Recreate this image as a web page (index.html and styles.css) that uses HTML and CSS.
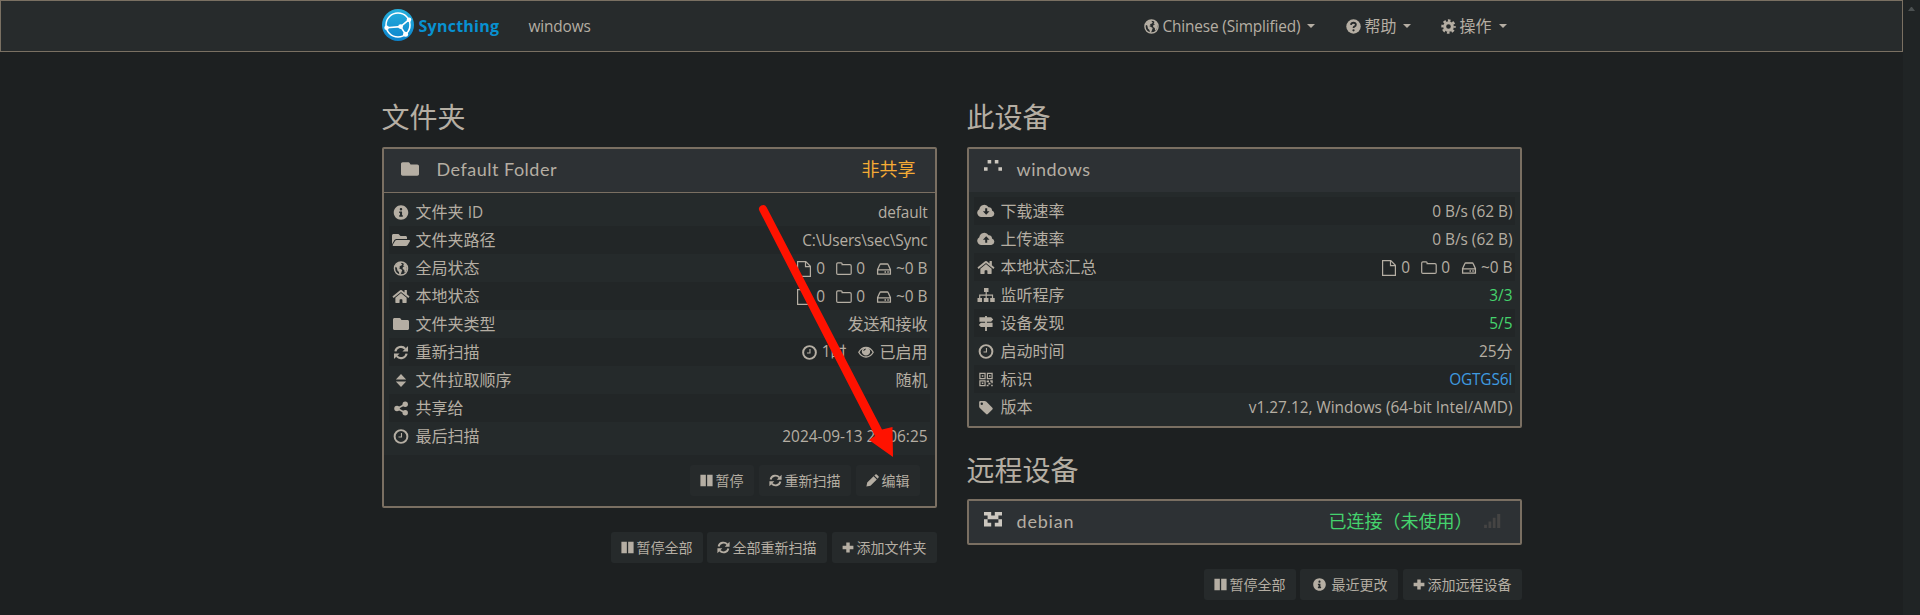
FILE: index.html
```html
<!DOCTYPE html>
<html lang="zh-CN">
<head>
<meta charset="utf-8">
<title>windows | Syncthing</title>
<link rel="stylesheet" href="styles.css">
</head>
<body>
<svg class="sprite" aria-hidden="true">
  <symbol id="folder" viewBox="0 0 512 512"><path d="M464 128H272l-32-52q-8-12-24-12H48C21 64 0 85 0 112v288c0 27 21 48 48 48h416c27 0 48-21 48-48V176c0-27-21-48-48-48z"/></symbol>
  <symbol id="info" viewBox="0 0 512 512"><path d="M256 8C119.043 8 8 119.083 8 256c0 136.997 111.043 248 248 248s248-111.003 248-248C504 119.083 392.957 8 256 8zm0 95c23 0 42 19 42 42s-19 42-42 42-42-19-42-42 19-42 42-42zm64 285c0 7-5 12-12 12h-104c-7 0-12-5-12-12v-28c0-7 5-12 12-12h16v-76h-16c-7 0-12-5-12-12v-24c0-7 5-12 12-12h76c7 0 12 5 12 12v112h16c7 0 12 5 12 12z"/></symbol>
  <symbol id="folder-open" viewBox="0 0 576 512"><path d="M572.694 292.093L500.27 416.248A63.997 63.997 0 0 1 444.989 448H45.025c-18.523 0-30.064-20.093-20.731-36.093l72.424-124.155A64 64 0 0 1 152 256h399.964c18.523 0 30.064 20.093 20.73 36.093zM152 224h328v-48c0-26.51-21.49-48-48-48H272l-64-64H48C21.49 64 0 85.49 0 112v278.046l69.077-118.418C86.214 242.25 117.989 224 152 224z"/></symbol>
  <symbol id="globe" viewBox="0 0 16 16"><circle cx="8" cy="8" r="7" fill="none" stroke="currentColor" stroke-width="1.5"/><path d="M3 3.500L6.500 1l2.500.6L8 3l1.500.8L8 5l-1.500.3.5 1.700-1.500.5 2 1 1.800 1.200-.8 2.300-1 2.500-1.200.3-.5-3-1.600-1.800L3.500 7 1.500 6zM10.500 2.200l2.500 1 1.800 3.300-1 .3.600 1.700-1.200 3-1.400 1-.3-2.800-1.800-1.200.3-2 1.800-1-1.600-.8.800-1z"/></symbol>
  <symbol id="home" viewBox="0 0 576 512"><path d="M280.37 148.26L96 300.11V464a16 16 0 0 0 16 16l112.06-.29a16 16 0 0 0 15.92-16V368a16 16 0 0 1 16-16h64a16 16 0 0 1 16 16v95.64a16 16 0 0 0 16 16.05L464 480a16 16 0 0 0 16-16V300L295.67 148.26a12.19 12.19 0 0 0-15.3 0zM571.6 251.47L488 182.56V44.05a12 12 0 0 0-12-12h-56a12 12 0 0 0-12 12v72.61L318.47 43a48 48 0 0 0-61 0L4.34 251.47a12 12 0 0 0-1.6 16.9l25.5 31A12 12 0 0 0 45.15 301l235.22-193.74a12.19 12.19 0 0 1 15.3 0L530.9 301a12 12 0 0 0 16.9-1.6l25.5-31a12 12 0 0 0-1.7-16.93z"/></symbol>
  <symbol id="refresh" viewBox="0 0 16 16"><path d="M2 6.800A6.100 6.100 0 0 1 12.600 4.100M14 9.200A6.100 6.100 0 0 1 3.400 11.900" fill="none" stroke="currentColor" stroke-width="2.300"/><path d="M15.500 1v6h-6zM.5 15V9h6z"/></symbol>
  <symbol id="sort" viewBox="0 0 16 16"><path d="M8 1l5.500 5.900h-11zM8 15l5.500-5.900h-11z"/></symbol>
  <symbol id="share" viewBox="0 0 16 16"><path d="M12.500 3.500L4 8l8.500 4.500" fill="none" stroke="currentColor" stroke-width="1.800"/><circle cx="12.500" cy="3.500" r="2.900"/><circle cx="3.700" cy="8" r="2.900"/><circle cx="12.500" cy="12.500" r="2.900"/></symbol>
  <symbol id="clock" viewBox="0 0 16 16"><path d="M8.500 4.200v4.300H5.300" fill="none" stroke="currentColor" stroke-width="1.200"/><circle cx="8" cy="8" r="6.800" fill="none" stroke="currentColor" stroke-width="2.100"/></symbol>
  <symbol id="file" viewBox="0 0 16 16"><path d="M1.600.7h8.200l4.600 4.600v10H1.600zM9.500.9v4.700h4.700" fill="none" stroke="currentColor" stroke-width="1.200"/></symbol>
  <symbol id="folder-o" viewBox="0 0 16 16"><path d="M.7 3q0-1.200 1.200-1.200h3.200q1 0 1 1v.9h7.800q1.300 0 1.300 1.300v7.200q0 1.200-1.200 1.200H1.900Q.7 13.400.7 12.200z" fill="none" stroke="currentColor" stroke-width="1.200"/></symbol>
  <symbol id="hdd" viewBox="0 0 16 16"><path d="M1.600 8.500l2.300-5q.2-.5.800-.5h6.600q.6 0 .8.500l2.300 5v4.600H1.600zM1.600 8.800h12.800" fill="none" stroke="currentColor" stroke-width="1.300"/><path d="M8.500 10.300H10v1.400H8.500zM11.300 10.300h1.500v1.400h-1.500z"/></symbol>
  <symbol id="eye" viewBox="0 0 16 16"><path d="M.8 8.200Q3.500 3.300 8 3.300t7.200 4.900Q12.500 13 8 13T.8 8.200z" fill="none" stroke="currentColor" stroke-width="1.300"/><path fill-rule="evenodd" d="M8 3.200a4.200 4.200 0 1 1 0 8.400 4.200 4.200 0 0 1 0-8.400zm-.2 1.300A2.700 2.700 0 0 0 5.300 7h.9a1.800 1.800 0 0 1 1.600-1.600z"/></symbol>
  <symbol id="pause" viewBox="0 0 16 16"><path d="M.5 1h6.700v14H.5zM8.800 1h6.700v14H8.800z"/></symbol>
  <symbol id="pencil" viewBox="0 0 16 16"><path d="M.5 15.500l1-5L9.300 2.700l4 4L5.500 14.500zM10.300 1.800l1.300-1.300q.8-.6 1.600.1l2.200 2.200q.7.800 0 1.600L14.300 5.700z"/></symbol>
  <symbol id="plus" viewBox="0 0 16 16"><path d="M5.700 1.200h4.600v4.500h4.900v4.600h-4.900v4.500H5.700v-4.500H.8V5.700h4.900z"/></symbol>
  <symbol id="cloud-down" viewBox="0 0 18 16"><path fill-rule="evenodd" d="M4.300 14A4.200 4.200 0 0 1 2.300 6.200 5 5 0 0 1 11.600 4.300 3 3 0 0 1 15 7.400 3.400 3.400 0 0 1 14.300 14zM8.200 5.200v3H5.900L9.200 11.700l3.300-3.500h-2.300v-3z"/></symbol>
  <symbol id="cloud-up" viewBox="0 0 18 16"><path fill-rule="evenodd" d="M4.300 14A4.200 4.200 0 0 1 2.300 6.200 5 5 0 0 1 11.600 4.300 3 3 0 0 1 15 7.400 3.400 3.400 0 0 1 14.300 14zM8.200 11.700v-3H5.900L9.200 5.200l3.300 3.500h-2.300v3z"/></symbol>
  <symbol id="sitemap" viewBox="0 0 18 16"><path d="M7 1h4.500v4H7zM.5 11h4.500v4H.5zM6.800 11h4.700v4H6.800zM13.200 11h4.500v4h-4.500z"/><path d="M9.200 4v8M2.700 12V8.200H15.500V12" fill="none" stroke="currentColor" stroke-width="1.200"/></symbol>
  <symbol id="signs" viewBox="0 0 16 16"><path d="M7 0h2v16H7z"/><path d="M1 1.400h12.500L15.700 3.700l-2.200 2.300H1zM15 7.200H2.500L.3 9.500l2.200 2.300H15z"/></symbol>
  <symbol id="qr" viewBox="0 0 16 16"><path d="M1.500 1.500H7V7H1.500zM9.500 1.500h5V7h-5zM1.500 9.500H7v5H1.500z" fill="none" stroke="currentColor" stroke-width="1.300"/><path d="M3.500 3.500h1.700v1.500H3.500zM11.200 3.500h1.700v1.500h-1.700zM3.500 11.200h1.700v1.500H3.500zM8.700 9h2.500v2h-2.500zM12.500 8.800h2.700v3.200h-1.500v-1.500h-1.200zM10.500 11.500h2.200v1.700h-2.200zM8.700 13.500h2v1.700h-2zM13.500 13.500h1.700v1.700h-1.700z"/></symbol>
  <symbol id="tag" viewBox="0 0 16 16"><path fill-rule="evenodd" d="M.7 2.300Q.7 1 2 1h4.500q1 0 1.700.7l6.600 6.600q.9.900 0 1.800l-4.900 4.900q-.9.900-1.800 0L1.400 8.400Q.7 7.700.7 6.800zM3.500 2.600a1.300 1.300 0 1 0 0 2.600 1.300 1.300 0 0 0 0-2.600z"/></symbol>
  <symbol id="help" viewBox="0 0 16 16"><circle cx="8" cy="8" r="7.700"/><path d="M5.300 6.200Q5.600 4 8 4t2.500 2Q10.500 7.200 9.200 7.900 8 8.500 8 9.600" fill="none" stroke="#272b2c" stroke-width="1.900"/><circle cx="8" cy="12" r="1.200" fill="#272b2c"/></symbol>
  <symbol id="cog" viewBox="0 0 16 16"><circle cx="8" cy="8" r="4.100" fill="none" stroke="currentColor" stroke-width="3.200"/><circle cx="8" cy="8" r="6.400" fill="none" stroke="currentColor" stroke-width="2.600" stroke-dasharray="2.800 2.226" stroke-dashoffset="1.400"/></symbol>
  <symbol id="signal" viewBox="0 0 18 15"><path d="M0 11.500h3V15H0zM4.700 8h3v7h-3zM9.300 4h3v11h-3zM14 0h3.300v15H14z"/></symbol>
</svg>

<div class="viewport">
<div class="page">
  <nav class="navbar">
    <div class="container nav-inner">
      <svg class="logo" viewBox="0 0 32 32"><defs><linearGradient id="lg" x1="0" y1="0" x2="0" y2="1"><stop offset="0" stop-color="#26b0dc"/><stop offset="1" stop-color="#0b83cd"/></linearGradient></defs><circle cx="16" cy="16" r="16" fill="url(#lg)"/><g fill="none" stroke="#fff" stroke-width="1.600"><circle cx="16" cy="16" r="12"/><path d="M18.600 17.600L27 10.700M18.600 17.600L4.600 18.700M18.600 17.600l5 7.600"/></g><g fill="#fff"><circle cx="18.600" cy="17.600" r="2.400"/><circle cx="27" cy="10.700" r="2.300"/><circle cx="4.600" cy="18.700" r="2.300"/><circle cx="23.600" cy="25.200" r="2.500"/></g></svg>
      <span class="brand">Syncthing</span>
      <span class="device latin tight">windows</span>
      <div class="menus">
        <span class="menu"><svg class="i"><use href="#globe"/></svg><span class="latin tight">Chinese (Simplified)</span><b class="caret"></b></span>
        <span class="menu"><svg class="i"><use href="#help"/></svg>帮助<b class="caret"></b></span>
        <span class="menu"><svg class="i"><use href="#cog"/></svg>操作<b class="caret"></b></span>
      </div>
    </div>
  </nav>

  <main class="container columns">
    <section class="col">
      <h3>文件夹</h3>
      <div class="panel">
        <div class="heading ruled"><svg class="hicon"><use href="#folder"/></svg><span class="title folder-title">Default Folder</span><span class="status warn">非共享</span></div>
        <div class="rows even">
          <div class="row"><svg class="i"><use href="#info"/></svg><span class="label">文件夹 <span class="latin">ID</span></span><span class="value latin tight">default</span></div>
          <div class="row"><svg class="i wide"><use href="#folder-open"/></svg><span class="label">文件夹路径</span><span class="value latin tight">C:\Users\sec\Sync</span></div>
          <div class="row"><svg class="i"><use href="#globe"/></svg><span class="label">全局状态</span><span class="value latin stats"><span><svg class="s"><use href="#file"/></svg>0</span><span><svg class="s"><use href="#folder-o"/></svg>0</span><span><svg class="s"><use href="#hdd"/></svg>~0 B</span></span></div>
          <div class="row"><svg class="i"><use href="#home"/></svg><span class="label">本地状态</span><span class="value latin stats"><span><svg class="s"><use href="#file"/></svg>0</span><span><svg class="s"><use href="#folder-o"/></svg>0</span><span><svg class="s"><use href="#hdd"/></svg>~0 B</span></span></div>
          <div class="row"><svg class="i fold"><use href="#folder"/></svg><span class="label">文件夹类型</span><span class="value">发送和接收</span></div>
          <div class="row"><svg class="i"><use href="#refresh"/></svg><span class="label">重新扫描</span><span class="value timing"><span><svg class="i"><use href="#clock"/></svg><span class="latin">1</span>时</span><span><svg class="s"><use href="#eye"/></svg>已启用</span></span></div>
          <div class="row"><svg class="i"><use href="#sort"/></svg><span class="label">文件拉取顺序</span><span class="value">随机</span></div>
          <div class="row"><svg class="i"><use href="#share"/></svg><span class="label">共享给</span></div>
          <div class="row"><svg class="i"><use href="#clock"/></svg><span class="label">最后扫描</span><span class="value latin">2024-09-13 21:06:25</span></div>
        </div>
        <div class="footer">
          <button><svg class="b"><use href="#pause"/></svg>暂停</button>
          <button><svg class="b"><use href="#refresh"/></svg>重新扫描</button>
          <button><svg class="b"><use href="#pencil"/></svg>编辑</button>
        </div>
      </div>
      <div class="actions">
        <button class="first"><svg class="b"><use href="#pause"/></svg>暂停全部</button>
        <button><svg class="b"><use href="#refresh"/></svg>全部重新扫描</button>
        <button class="last"><svg class="b"><use href="#plus"/></svg>添加文件夹</button>
      </div>
    </section>

    <section class="col">
      <h3>此设备</h3>
      <div class="panel">
        <div class="heading open"><svg class="identicon" viewBox="0 0 5 5"><path d="M1 0h1v1H1zM3 0h1v1H3zM0 2h1v1H0zM4 2h1v1H4z"/></svg><span class="title">windows</span></div>
        <div class="rows odd">
          <div class="row"><svg class="i wide"><use href="#cloud-down"/></svg><span class="label">下载速率</span><span class="value latin">0 B/s (62 B)</span></div>
          <div class="row"><svg class="i wide"><use href="#cloud-up"/></svg><span class="label">上传速率</span><span class="value latin">0 B/s (62 B)</span></div>
          <div class="row"><svg class="i"><use href="#home"/></svg><span class="label">本地状态汇总</span><span class="value latin stats"><span><svg class="s"><use href="#file"/></svg>0</span><span><svg class="s"><use href="#folder-o"/></svg>0</span><span><svg class="s"><use href="#hdd"/></svg>~0 B</span></span></div>
          <div class="row"><svg class="i wide"><use href="#sitemap"/></svg><span class="label">监听程序</span><span class="value latin ok">3/3</span></div>
          <div class="row"><svg class="i"><use href="#signs"/></svg><span class="label">设备发现</span><span class="value latin ok">5/5</span></div>
          <div class="row"><svg class="i"><use href="#clock"/></svg><span class="label">启动时间</span><span class="value"><span class="latin">25</span>分</span></div>
          <div class="row"><svg class="i"><use href="#qr"/></svg><span class="label">标识</span><span class="value latin tight link">OGTGS6I</span></div>
          <div class="row"><svg class="i"><use href="#tag"/></svg><span class="label">版本</span><span class="value latin">v1.27.12, Windows (64-bit Intel/AMD)</span></div>
        </div>
      </div>
      <h3 class="second">远程设备</h3>
      <div class="panel">
        <div class="heading"><svg class="identicon" viewBox="0 0 5 5"><path d="M0 0h2v1h1V0h2v1H4v1H1V1H0zM0 2h1v1h1v1H0zM4 2h1v2H3V3h1z"/></svg><span class="title debian">debian</span><span class="status ok">已连接（未使用）</span><svg class="signal"><use href="#signal"/></svg></div>
      </div>
      <div class="actions">
        <button class="first"><svg class="b"><use href="#pause"/></svg>暂停全部</button>
        <button class="recent"><svg class="b"><use href="#info"/></svg>最近更改</button>
        <button class="last"><svg class="b"><use href="#plus"/></svg>添加远程设备</button>
      </div>
    </section>
  </main>
</div>
<div class="scrollbar"><i></i></div>
<svg class="arrow" viewBox="0 0 140 262"><path d="M1.500 10A4 4 0 0 1 8.600 6.200L124 228.500 134.500 226 135 256 111 239 117 235z"/></svg>
</div>
</body>
</html>
```
FILE: styles.css
```css
* { box-sizing: border-box; }

body {
  margin: 0;
  background: #1d2021;
  color: #b5aea3;
  font: 16px/28px "Open Sans", "Noto Sans CJK SC", sans-serif;
  overflow: hidden;
}

svg { fill: currentColor; flex: none; }
.sprite { display: none; }

.viewport { display: flex; height: 615px; position: relative; }
.page { flex: 1; }

.scrollbar {
  width: 17px;
  background: #202425;
  padding: 7px 0 0 5px;
}
.scrollbar i {
  display: block;
  width: 7px;
  border: solid transparent;
  border-width: 0 3.5px 4px;
  border-bottom-color: #4b5051;
}

.container { width: 1140px; margin: 0 auto; }

.navbar {
  height: 52px;
  background: #272b2c;
  border: 1px solid #7a7062;
}
.nav-inner { display: flex; align-items: center; height: 50px; }
.logo { width: 32px; height: 32px; margin-bottom: 2px; }
.brand {
  width: 110px;
  margin: 0 0 1px 5px;
  font-weight: 700;
  color: #0891d1;
  font-size: 16px;
  letter-spacing: .25px;
}
.menus { margin-left: auto; display: flex; gap: 30px; padding-right: 15px; }
.menu { display: flex; align-items: center; gap: 3px; }
.menu:first-child { margin-right: 1px; }
.navbar .i { width: 15px; }
.navbar .latin { padding-top: 2px; }
.caret {
  margin-left: 4px;
  border: solid transparent;
  border-width: 4px 4px 0;
  border-top-color: currentColor;
}

.latin { font-size: 15.4px; }
.tight { letter-spacing: -.15px; }

.columns { display: grid; grid-template-columns: 555px 555px; gap: 30px; }

h3 {
  margin: 45px 0 10px;
  font-size: 28px;
  line-height: 40px;
  font-weight: 400;
}
h3.second { margin: 22px 0 9px; }

.panel {
  border: 2px solid #7a6f62;
  border-radius: 2px;
  background: #252a2b;
}
.heading {
  display: flex;
  align-items: center;
  height: 42px;
  padding: 0 19px 2px 15px;
  background: #2d3134;
}
.heading.open { height: 43px; padding-bottom: 3px; }
.heading.ruled { height: 44px; padding-bottom: 4px; border-bottom: 1px solid #7a6f62; }
.hicon { width: 18px; height: 18px; margin: 0 18px 0 2px; }
.title { font: 400 18px/28px Lato, sans-serif; letter-spacing: .5px; }
.debian { letter-spacing: .8px; }
.identicon { width: 18px; height: 18px; margin-right: 15px; color: #ccc7bf; }
.status { margin-left: auto; font-size: 18px; }
.signal { width: 17px; height: 14px; color: #454443; margin-left: 11px; }

.warn { color: #f5ab35; }
.ok { color: #45d36d; }
.link { color: #3f9be0; }

.rows { padding: 5px; }
.row {
  display: flex;
  align-items: center;
  height: 28px;
  padding: 0 2px 0 3px;
}
.even .row:nth-child(even), .odd .row:nth-child(odd) { background: #222627; }
.i { width: 15px; height: 15px; }
.row > .i { width: 18px; height: 15px; margin-right: 6px; }
.row > .i.wide { height: 16px; }
.row > .i.fold { height: 16px; }
.value { margin-left: auto; }
.value.latin { line-height: 26px; padding-top: 2px; }
.stats, .timing, .stats > span, .timing > span { display: flex; align-items: center; }
.stats { gap: 11px; }
.timing { gap: 12px; }
.stats > span { gap: 4px; }
.timing > span > svg { margin-right: 5px; }
.s { width: 16px; height: 16px; }
.stats .s { margin-bottom: 1px; }

.footer {
  display: flex;
  justify-content: flex-end;
  gap: 5px;
  height: 51px;
  padding: 10px 15px;
  background: #222627;
}
.actions { display: flex; justify-content: flex-end; gap: 5px; margin-top: 24px; }
button {
  display: flex;
  align-items: center;
  gap: 3px;
  height: 31px;
  padding: 0 10px;
  border: 0;
  border-radius: 3px;
  background: #262a2b;
  color: inherit;
  font: 14px/28px "Open Sans", "Noto Sans CJK SC", sans-serif;
  white-space: nowrap;
}
.b { width: 13px; height: 13px; }
.first { margin-right: -1px; }
.last .b { width: 12px; }
.recent { padding-left: 13px; gap: 6px; }

/* pointer laid over the folder card */
.arrow { position: absolute; left: 758px; top: 201px; width: 140px; height: 262px; fill: #ff1200; }
```
